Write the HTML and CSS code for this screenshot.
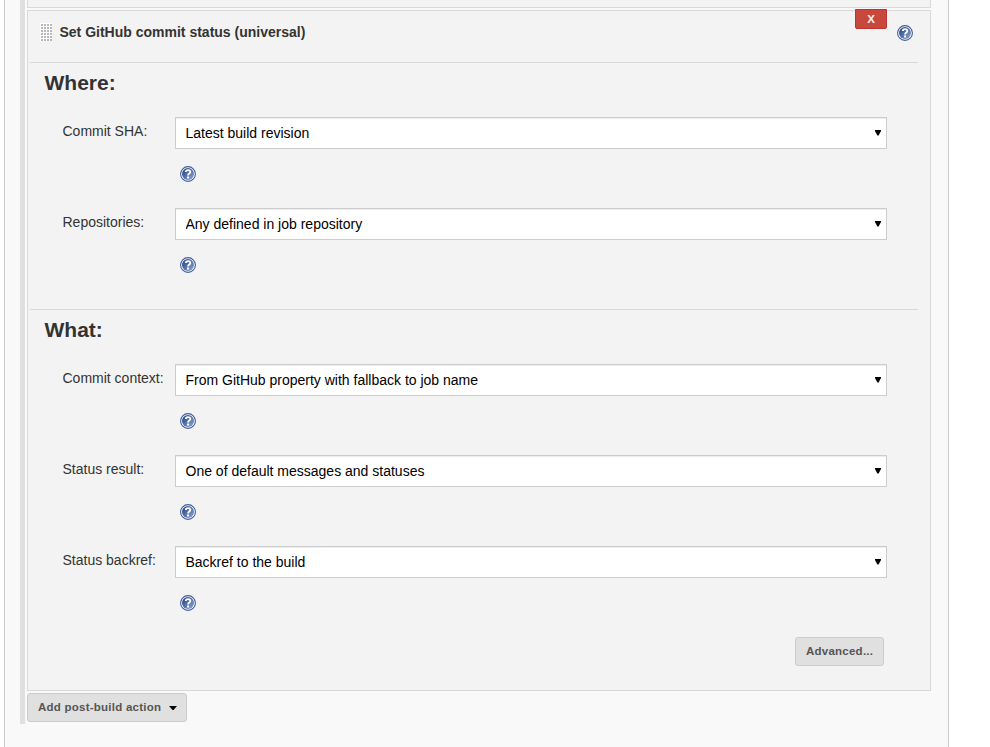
FILE: index.html
```html
<!DOCTYPE html>
<html lang="en">
<head>
<meta charset="utf-8">
<title>Post-build Actions</title>
<link rel="stylesheet" href="styles.css">
</head>
<body>
<svg class="defs" width="0" height="0" aria-hidden="true">
  <defs>
    <linearGradient id="blue" x1="0" y1="0" x2="1" y2="1">
      <stop offset="0.15" stop-color="#2c4c8c"/>
      <stop offset="0.85" stop-color="#8099c9"/>
    </linearGradient>
    <symbol id="help" viewBox="0 0 16 16">
      <circle cx="8" cy="8" r="7.4" fill="#fff" stroke="#405c99" stroke-width="1.1"/>
      <circle cx="8" cy="8" r="6" fill="url(#blue)"/>
      <path d="M5.8 6.1C5.8 3.4 10.3 3.5 10.3 5.9C10.3 7.5 8.1 7.6 8.1 9.4" fill="none" stroke="#fff" stroke-width="1.9"/>
      <rect x="7" y="10.5" width="2.1" height="2" fill="#fff"/>
    </symbol>
    <symbol id="arrow" viewBox="0 0 6 6">
      <path d="M0 0H6V1L3.6 5.6H2.4L0 1Z" fill="#000"/>
    </symbol>
  </defs>
</svg>
<main class="panel">
  <div class="chunks">
    <div class="previous"></div>
    <article class="card">
      <header class="card-head">
        <span class="grip"></span>
        <b class="title">Set GitHub commit status (universal)</b>
        <button class="delete">X</button>
        <svg class="help"><use href="#help"/></svg>
      </header>
      <section class="section">
        <h2>Where:</h2>
        <div class="row">
          <label for="sha">Commit SHA:</label>
          <div class="field">
            <div class="pick"><select id="sha"><option>Latest build revision</option></select><svg class="arrow"><use href="#arrow"/></svg></div>
            <svg class="help"><use href="#help"/></svg>
          </div>
        </div>
        <div class="row">
          <label for="repos">Repositories:</label>
          <div class="field">
            <div class="pick"><select id="repos"><option>Any defined in job repository</option></select><svg class="arrow"><use href="#arrow"/></svg></div>
            <svg class="help"><use href="#help"/></svg>
          </div>
        </div>
      </section>
      <section class="section">
        <h2>What:</h2>
        <div class="row">
          <label for="context">Commit context:</label>
          <div class="field">
            <div class="pick"><select id="context"><option>From GitHub property with fallback to job name</option></select><svg class="arrow"><use href="#arrow"/></svg></div>
            <svg class="help"><use href="#help"/></svg>
          </div>
        </div>
        <div class="row">
          <label for="result">Status result:</label>
          <div class="field">
            <div class="pick"><select id="result"><option>One of default messages and statuses</option></select><svg class="arrow"><use href="#arrow"/></svg></div>
            <svg class="help"><use href="#help"/></svg>
          </div>
        </div>
        <div class="row">
          <label for="backref">Status backref:</label>
          <div class="field">
            <div class="pick"><select id="backref"><option>Backref to the build</option></select><svg class="arrow"><use href="#arrow"/></svg></div>
            <svg class="help"><use href="#help"/></svg>
          </div>
        </div>
      </section>
      <footer class="card-foot"><button class="button advanced">Advanced...</button></footer>
    </article>
    <button class="button add">Add post-build action
      <svg class="caret" viewBox="0 0 8 4"><path d="M0 0H8L4.5 4H3.5Z"/></svg>
    </button>
  </div>
</main>
</body>
</html>
```
FILE: styles.css
```css
* {
  box-sizing: border-box;
}

body {
  margin: 0;
  height: 747px;
  overflow: hidden;
  background: #fff;
  color: #333;
  font: 14px/20px "Liberation Sans", Arial, sans-serif;
}

.defs {
  display: block;
}

.panel {
  width: 945px;
  height: 747px;
  margin-left: 4px;
  padding-left: 15px;
  border: solid #ccc;
  border-width: 0 1px;
  background: #f9f9f9;
}

.chunks {
  width: 911px;
  height: 724px;
  padding-left: 2px;
  border-left: 5px solid #e0e0e0;
}

.previous {
  height: 8px;
  margin-bottom: 2px;
  border: solid #d9d9d9;
  border-width: 0 1px 1px;
  background: #f3f3f3;
}

.card {
  height: 681px;
  margin-bottom: 2px;
  padding: 0 12px 0 2px;
  border: 1px solid #d9d9d9;
  background: #f3f3f3;
}

.card-head {
  display: flex;
  align-items: flex-start;
  height: 51px;
  padding: 0 5px 0 10px;
}

.grip {
  width: 12px;
  height: 18px;
  margin: 12px 7.5px 0 0;
  background: #fff conic-gradient(from 270deg at 2px 2px, #b8b8b8 90deg, transparent 0) 1px 1px / 3px 3px;
}

.title {
  margin-top: 11px;
}

.delete {
  width: 32px;
  height: 20px;
  margin: -2px 10px 0 auto;
  padding: 0;
  border: 1px solid #b8362f;
  border-radius: 0 0 2px 2px;
  background: #c9483e;
  color: #f2f2f2;
  font: bold 11.5px/18px "Liberation Sans", Arial, sans-serif;
}

.help {
  display: block;
  flex: none;
  width: 16px;
  height: 16px;
}

.card-head .help {
  margin-top: 14px;
}

.section {
  border-top: 1px solid #d9d9d9;
}

.section + .section {
  margin-top: 10px;
}

h2 {
  height: 54px;
  margin: 0;
  padding: 8px 0 0 14.5px;
  font-size: 21px;
  line-height: 24px;
}

.row {
  display: flex;
  height: 91px;
  padding-left: 32.5px;
}

.row label {
  width: 112.5px;
  padding-top: 4px;
}

.pick {
  position: relative;
}

.pick select {
  display: block;
  width: 712px;
  height: 32px;
  padding: 0 10px 0 9.5px;
  border: 1px solid #ccc;
  border-radius: 0;
  appearance: none;
  background: #fff;
  box-shadow: inset 0 1px 1px rgba(0, 0, 0, 0.075);
  color: #000;
  font: 14px/20px "Liberation Sans", Arial, sans-serif;
}

.arrow {
  position: absolute;
  top: 13px;
  right: 6px;
  width: 6px;
  height: 6px;
  pointer-events: none;
}

.field .help {
  margin: 17px 0 0 5px;
}

.card-foot {
  display: flex;
  justify-content: flex-end;
  padding-right: 34px;
}

.button {
  display: flex;
  align-items: center;
  height: 29px;
  padding: 0 10px 1px;
  border: 1px solid #ccc;
  border-radius: 3px;
  background: #e0e0e0;
  color: #555;
  font: bold 11.5px/20px "Liberation Sans", Arial, sans-serif;
  letter-spacing: 0.24px;
  white-space: nowrap;
}

.advanced {
  width: 89px;
}

.add {
  width: 160px;
  justify-content: space-between;
}

.caret {
  width: 8px;
  height: 4px;
  margin: 2px -1px 0 0;
  fill: #000;
}
```
